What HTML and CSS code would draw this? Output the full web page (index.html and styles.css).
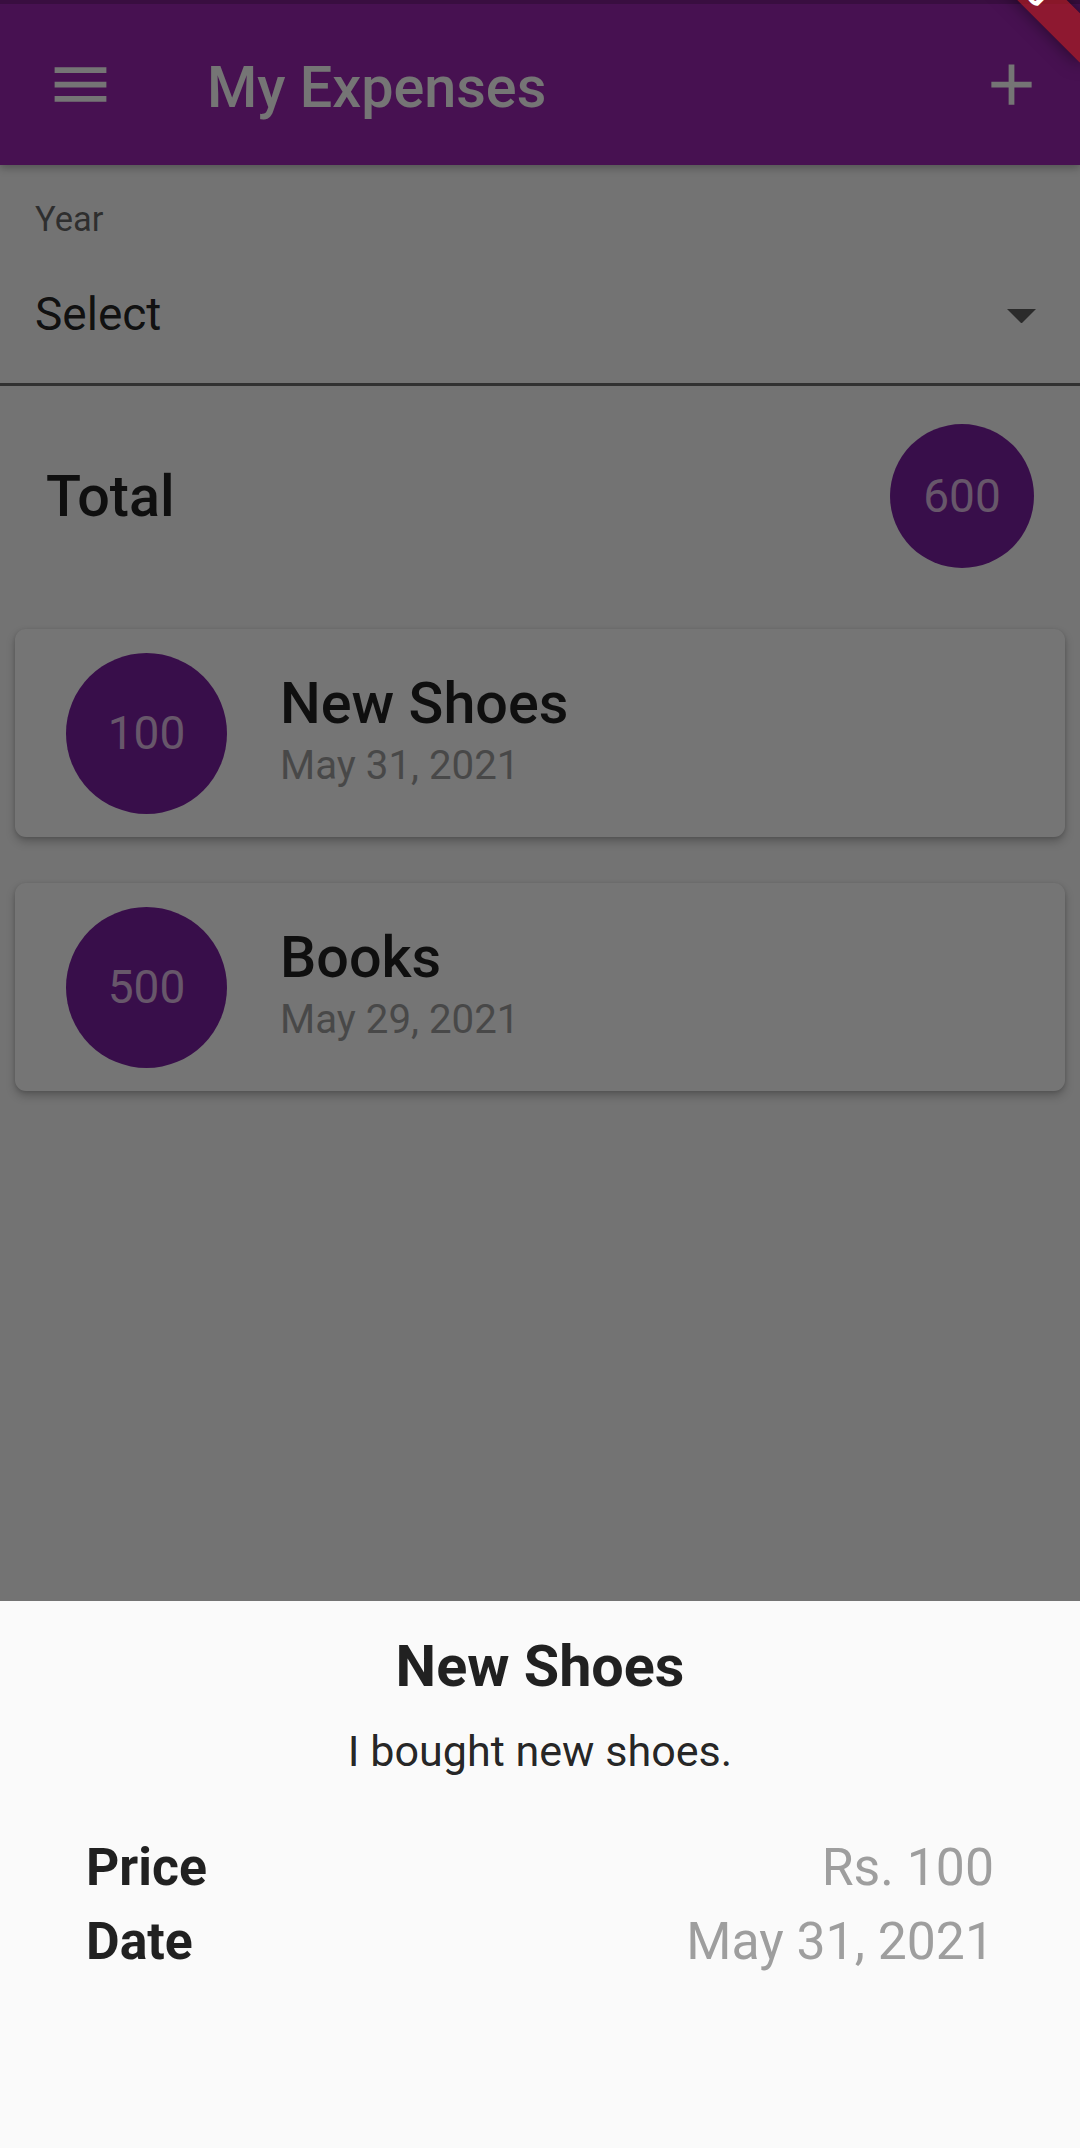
FILE: index.html
```html
<!DOCTYPE html>
<html lang="en">
<head>
<meta charset="utf-8">
<title>My Expenses</title>
<link rel="stylesheet" href="styles.css">
</head>
<body>
<div class="screen">
  <header class="appbar">
    <div class="status-strip"></div>
    <div class="toolbar">
      <div class="leading">
        <svg class="icon" viewBox="0 0 24 24" width="69" height="69"><path d="M3 18h18v-2H3v2zm0-5h18v-2H3v2zm0-7v2h18V6H3z" fill="#fff"/></svg>
      </div>
      <h1 class="title">My Expenses</h1>
      <div class="action">
        <svg class="icon" viewBox="0 0 24 24" width="69" height="69"><path d="M19 13h-6v6h-2v-6H5v-2h6V5h2v6h6v2z" fill="#fff"/></svg>
      </div>
    </div>
  </header>

  <main class="content">
    <div class="year-field">
      <div class="field-label">Year</div>
      <div class="field-row">
        <span class="field-value">Select</span>
        <svg class="dropdown-arrow" viewBox="0 0 10 5" width="29" height="14.5"><path d="M0 0l5 5 5-5z" fill="#5f5f5f"/></svg>
      </div>
    </div>

    <div class="total-row">
      <span class="total-label">Total</span>
      <div class="avatar avatar-total">600</div>
    </div>

    <ul class="expense-list">
      <li class="card">
        <div class="avatar">100</div>
        <div class="card-text">
          <div class="card-title">New Shoes</div>
          <div class="card-date">May 31, 2021</div>
        </div>
      </li>
      <li class="card">
        <div class="avatar">500</div>
        <div class="card-text">
          <div class="card-title">Books</div>
          <div class="card-date">May 29, 2021</div>
        </div>
      </li>
    </ul>
  </main>

  <div class="barrier"></div>

  <section class="sheet">
    <h2 class="sheet-title">New Shoes</h2>
    <p class="sheet-desc">I bought new shoes.</p>
    <div class="detail-rows">
      <div class="detail-row"><span class="detail-label">Price</span><span class="detail-value">Rs. 100</span></div>
      <div class="detail-row"><span class="detail-label">Date</span><span class="detail-value">May 31, 2021</span></div>
    </div>
  </section>

  <div class="debug-banner">DEBUG</div>
</div>
</body>
</html>
```

FILE: styles.css
```css
* { box-sizing: border-box; }

html, body {
  margin: 0;
  padding: 0;
  background: #fafafa;
}

body {
  font-family: Roboto, "Noto Sans", "Liberation Sans", sans-serif;
}

.screen {
  position: relative;
  width: 1080px;
  height: 2148px;
  overflow: hidden;
  background: #fafafa;
}

/* ---------- App bar ---------- */
.appbar {
  position: relative;
  z-index: 1;
  height: 165px;
  background: #9c27b0;
  box-shadow: 0 3px 8px rgba(0, 0, 0, 0.28);
  display: flex;
  flex-direction: column;
}

.status-strip {
  height: 4px;
  background: rgba(0, 0, 0, 0.2);
}

.toolbar {
  height: 161px;
  display: flex;
  align-items: center;
}

.leading {
  width: 161px;
  height: 161px;
  display: flex;
  align-items: center;
  justify-content: center;
}

.icon { display: block; }

.title {
  flex: 1;
  margin: 0 0 0 46px;
  padding-top: 5px;
  font-size: 57.5px;
  font-weight: 500;
  line-height: normal;
  color: #fff;
}

.action {
  width: 138px;
  height: 138px;
  display: flex;
  align-items: center;
  justify-content: center;
}

/* ---------- Year dropdown ---------- */
.year-field {
  height: 221px;
  padding: 34px 44px 0 35px;
  border-bottom: 3px solid #6b6b6b;
}

.field-label {
  font-size: 34.5px;
  line-height: normal;
  color: rgba(0, 0, 0, 0.6);
}

.field-row {
  margin-top: 48px;
  display: flex;
  align-items: center;
  justify-content: space-between;
}

.field-value {
  font-size: 46px;
  line-height: normal;
  color: rgba(0, 0, 0, 0.87);
}

.dropdown-arrow {
  display: block;
  margin-top: 4px;
}

/* ---------- Total ---------- */
.total-row {
  margin-top: 38px;
  padding: 0 46px;
  display: flex;
  align-items: center;
  justify-content: space-between;
}

.total-label {
  font-size: 57.5px;
  font-weight: 500;
  line-height: normal;
  color: rgba(0, 0, 0, 0.87);
}

.avatar {
  flex: none;
  width: 161px;
  height: 161px;
  border-radius: 50%;
  background: #7b1fa2;
  color: #e1bee7;
  font-size: 46px;
  display: flex;
  align-items: center;
  justify-content: center;
}

.avatar-total {
  width: 144px;
  height: 144px;
}

/* ---------- Expense cards ---------- */
.expense-list {
  list-style: none;
  margin: 61px 15px 0;
  padding: 0;
}

.card {
  height: 208px;
  margin-bottom: 46px;
  padding-left: 51px;
  background: #fff;
  border-radius: 11px;
  box-shadow: 0 5px 10px rgba(0, 0, 0, 0.22), 0 1px 4px rgba(0, 0, 0, 0.14);
  display: flex;
  align-items: center;
}

.card-text {
  margin-left: 53px;
  padding-bottom: 7px;
}

.card-title {
  font-size: 57.5px;
  font-weight: 500;
  line-height: normal;
  color: rgba(0, 0, 0, 0.87);
}

.card-date {
  margin-top: 5px;
  font-size: 40.25px;
  line-height: normal;
  color: #9e9e9e;
}

/* ---------- Modal barrier ---------- */
.barrier {
  position: absolute;
  inset: 0;
  z-index: 2;
  background: rgba(0, 0, 0, 0.54);
}

/* ---------- Bottom sheet ---------- */
.sheet {
  position: absolute;
  left: 0;
  right: 0;
  bottom: 0;
  height: 547px;
  z-index: 3;
  background: #fafafa;
  padding: 32px 86px 0;
}

.sheet-title {
  margin: 0;
  text-align: center;
  font-size: 57.5px;
  font-weight: 700;
  line-height: normal;
  color: rgba(0, 0, 0, 0.87);
}

.sheet-desc {
  margin: 26px 0 0;
  text-align: center;
  font-size: 43.1px;
  line-height: normal;
  color: rgba(0, 0, 0, 0.87);
}

.detail-rows {
  margin-top: 60px;
  display: flex;
  flex-direction: column;
  gap: 13px;
}

.detail-row {
  display: flex;
  justify-content: space-between;
  align-items: baseline;
  font-size: 51.75px;
  line-height: normal;
}

.detail-label {
  font-weight: 700;
  color: rgba(0, 0, 0, 0.87);
}

.detail-value {
  color: #9e9e9e;
}

/* ---------- Debug banner ---------- */
.debug-banner {
  position: absolute;
  z-index: 4;
  left: 965px;
  top: -20.5px;
  width: 230px;
  height: 34.5px;
  transform-origin: 115px -80.5px;
  transform: rotate(45deg);
  background: rgba(183, 28, 28, 0.63);
  box-shadow: 0 0 18px rgba(0, 0, 0, 0.5);
  color: #fff;
  font-size: 29.3px;
  font-weight: 900;
  line-height: 34.5px;
  text-align: center;
}
```
